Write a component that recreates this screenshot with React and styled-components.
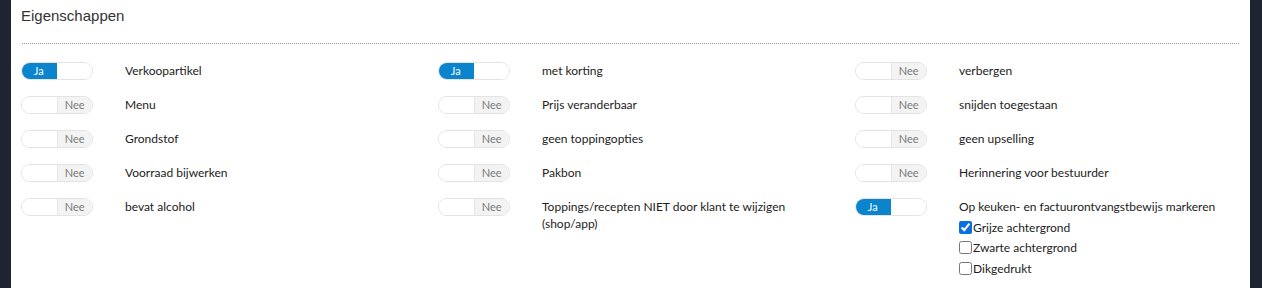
import React from "react";
import styled, { createGlobalStyle } from "styled-components";

const Global = createGlobalStyle`
  html, body { margin: 0; padding: 0; background: #1e2432; }
  body { font-family: Lato, "Noto Sans", sans-serif; }
`;

const Page = styled.div`
  display: flex;
  height: 288px;
  padding: 0 12px 0 11px;
  background: #1e2432;
`;

const Panel = styled.section`
  flex: 1;
  background: #fff;
  padding: 0 11px 0 10px;
  overflow: hidden;
`;

const Title = styled.h3`
  margin: 0;
  padding-top: 6px;
  font-family: "Liberation Sans", Arial, sans-serif;
  font-weight: 400;
  font-size: 15px;
  line-height: 20px;
  color: #333;
`;

const Divider = styled.hr`
  margin: 17px 0 0 1px;
  border: 0;
  border-top: 1px dotted #9a9a9a;
  height: 0;
`;

const Grid = styled.div`
  display: grid;
  grid-template-columns: 417px 417px 1fr;
  row-gap: 16px;
  margin-top: 18px;
`;

const Item = styled.div`
  display: flex;
  align-items: flex-start;
`;

const Toggle = styled.div`
  display: flex;
  width: 72px;
  height: 18px;
  box-sizing: border-box;
  border: 1px solid #e3e3e3;
  border-radius: 9px;
  overflow: hidden;
  flex-shrink: 0;
  font-family: Lato, sans-serif;
  font-size: 11px;
  line-height: 16px;
`;

const Half = styled.span`
  flex: 1;
  text-align: center;
  background: ${(p) => (p.$on ? "#0a84cc" : p.$filled ? "#f3f3f3" : "#fff")};
  color: ${(p) => (p.$on ? "#fff" : "#7a7a7a")};
  margin: ${(p) => (p.$on ? "-1px 0 -1px -1px" : "0")};
  line-height: ${(p) => (p.$on ? "18px" : "16px")};
  border-left: ${(p) => (p.$sep ? "1px solid #e6e6e6" : "0")};
`;

const Label = styled.div`
  margin-left: 32px;
  max-width: 280px;
  font-size: 12px;
  line-height: 17px;
  color: #222;
`;

const Checks = styled.div`
  display: flex;
  flex-direction: column;
  margin-top: 2px;
`;

const CheckRow = styled.label`
  display: flex;
  align-items: center;
  height: 20.5px;
  font-size: 12px;
  color: #222;
`;

const Box = styled.input`
  width: 13px;
  height: 13px;
  margin: 0 1px 0 0;
  accent-color: #0a6fe0;
`;

function Switch({ on }) {
  return (
    <Toggle>
      {on ? (
        <>
          <Half $on>Ja</Half>
          <Half />
        </>
      ) : (
        <>
          <Half />
          <Half $filled $sep>Nee</Half>
        </>
      )}
    </Toggle>
  );
}

const items = [
  ["Verkoopartikel", true],
  ["met korting", true],
  ["verbergen", false],
  ["Menu", false],
  ["Prijs veranderbaar", false],
  ["snijden toegestaan", false],
  ["Grondstof", false],
  ["geen toppingopties", false],
  ["geen upselling", false],
  ["Voorraad bijwerken", false],
  ["Pakbon", false],
  ["Herinnering voor bestuurder", false],
  ["bevat alcohol", false],
  ["Toppings/recepten NIET door klant te wijzigen (shop/app)", false],
];

export default function App() {
  return (
    <>
      <Global />
      <Page>
        <Panel>
          <Title>Eigenschappen</Title>
          <Divider />
          <Grid>
            {items.map(([t, on]) => (
              <Item key={t}>
                <Switch on={on} />
                <Label>{t}</Label>
              </Item>
            ))}
            <Item>
              <Switch on />
              <Label>
                Op keuken- en factuurontvangstbewijs markeren
                <Checks>
                  <CheckRow>
                    <Box type="checkbox" defaultChecked />
                    Grijze achtergrond
                  </CheckRow>
                  <CheckRow>
                    <Box type="checkbox" />
                    Zwarte achtergrond
                  </CheckRow>
                  <CheckRow>
                    <Box type="checkbox" />
                    Dikgedrukt
                  </CheckRow>
                </Checks>
              </Label>
            </Item>
          </Grid>
        </Panel>
      </Page>
    </>
  );
}
